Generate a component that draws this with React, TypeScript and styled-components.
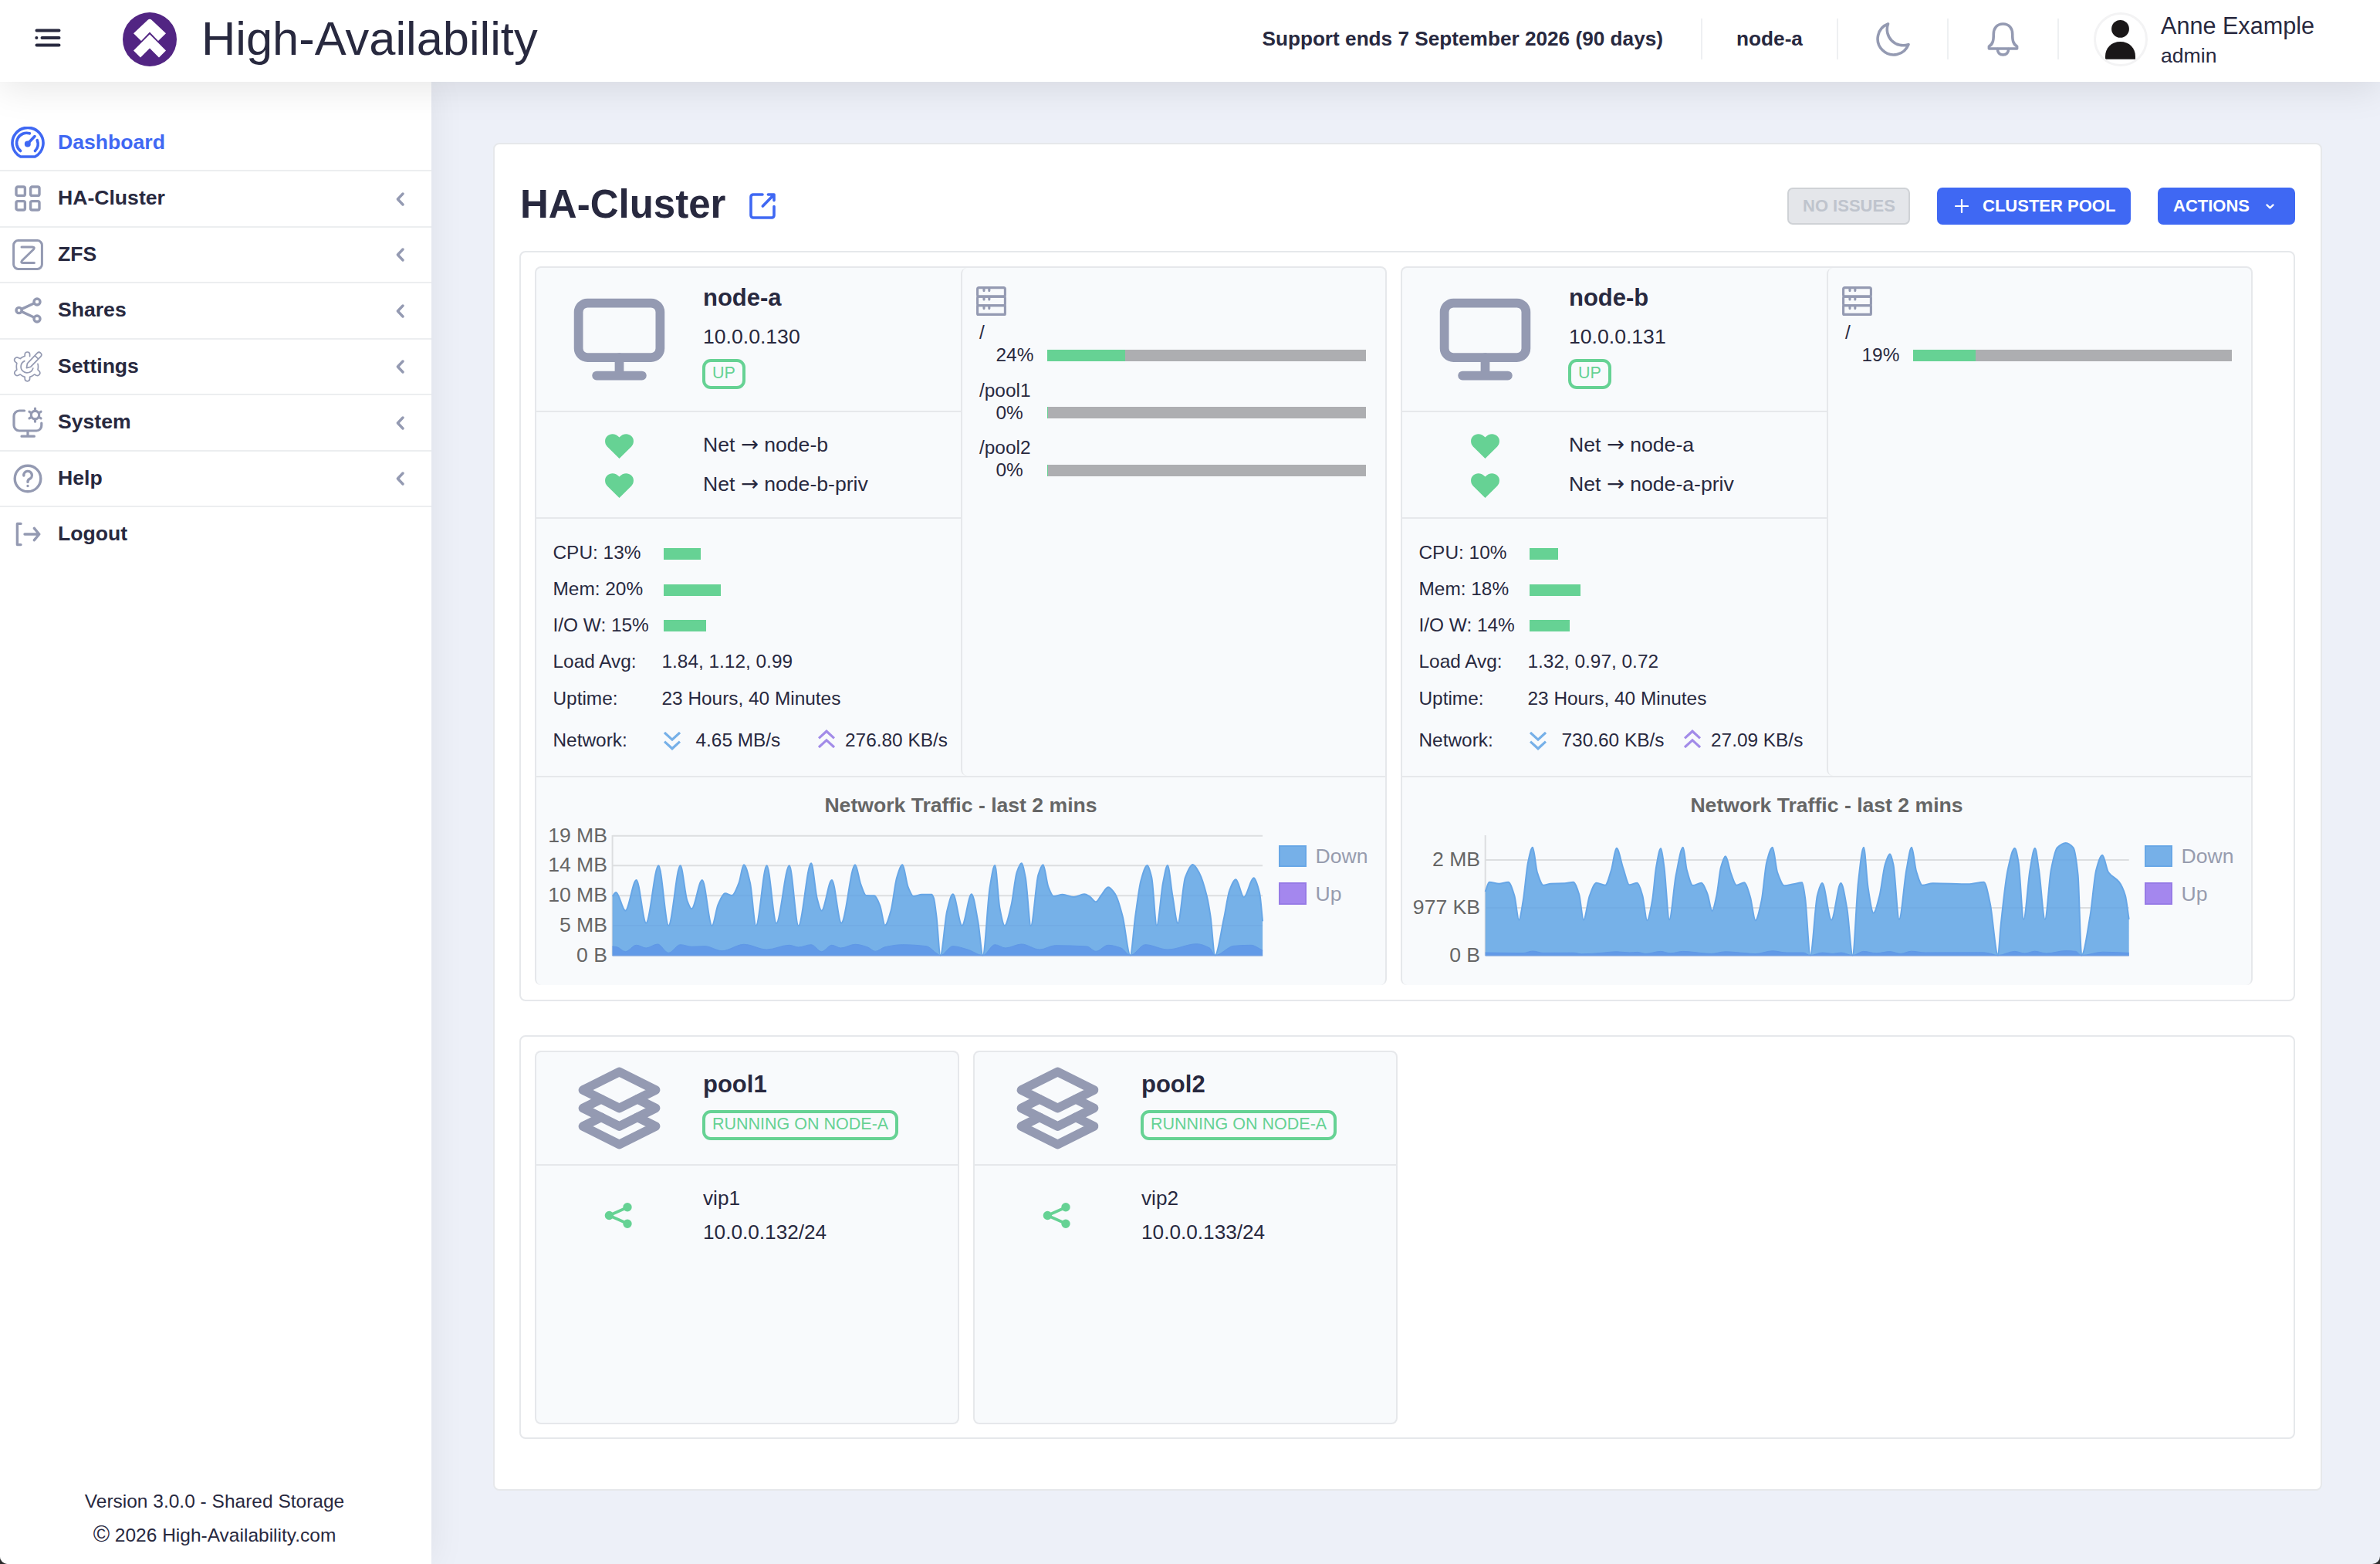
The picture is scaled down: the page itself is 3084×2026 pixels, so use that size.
import React from "react"
import styled, { createGlobalStyle } from "styled-components"

const ink = "#28293f"
const muted = "#949ab2"
const green = "#66d294"
const blue = "#3f68f3"
const line = "#e6e8eb"
const surface = "#f8fafc"

const GlobalStyle = createGlobalStyle`
  * {
    box-sizing: border-box;
  }
  body {
    margin: 0;
    background: #2b2b2b;
    color: ${ink};
    font-family: "Liberation Sans", Arial, Helvetica, sans-serif;
    font-size: 26.6px;
  }
  svg {
    display: block;
    flex: none;
  }
`

const Page = styled.div`
  display: flex;
  flex-direction: column;
  width: 3084px;
  height: 2026px;
  overflow: hidden;
  background: #edf0f8;
  border-radius: 0 0 10px 10px;
`

/* top bar */

const TopBar = styled.header`
  position: relative;
  z-index: 2;
  display: flex;
  align-items: center;
  flex: none;
  height: 106px;
  padding: 0 0 5px 45px;
  background: #fff;
  box-shadow: 0 8px 48px rgba(0, 0, 0, 0.1);
`

const Brand = styled.div`
  display: flex;
  align-items: center;
  gap: 32px;
  margin-left: 80px;
`

const BrandName = styled.div`
  font-size: 61.4px;
  line-height: 70px;
  padding-bottom: 1px;
`

const Support = styled.div`
  margin-left: auto;
  margin-right: 49px;
  font-size: 26.2px;
  font-weight: 700;
`

const BarCell = styled.div<{ $width: number }>`
  display: flex;
  align-items: center;
  justify-content: center;
  width: ${({ $width }) => $width}px;
  height: 53px;
  border-left: 2px solid #eef0f2;
  font-size: 26.2px;
  font-weight: 700;
`

const UserCell = styled(BarCell)`
  justify-content: flex-start;
  gap: 17px;
  padding-left: 45px;
  font-weight: 400;
`

const Avatar = styled.div`
  width: 70px;
  height: 70px;
  border: 3px solid #f3f3f4;
  border-radius: 50%;
  overflow: hidden;
  flex: none;
`

const UserText = styled.div`
  padding-top: 4px;
  font-size: 26.6px;
  line-height: 39px;
`

const UserName = styled.div`
  font-size: 30.6px;
`

/* sidebar */

const Body = styled.div`
  display: flex;
  flex: 1;
  min-height: 0;
`

const Sidebar = styled.nav`
  position: relative;
  z-index: 1;
  display: flex;
  flex-direction: column;
  flex: none;
  width: 559px;
  padding-top: 43.5px;
  background: #fff;
  box-shadow: 0 0 44px rgba(0, 0, 0, 0.07);
`

const NavRow = styled.a<{ $active?: boolean; $last?: boolean }>`
  display: flex;
  align-items: center;
  height: 72.5px;
  padding: 0 35px 0 14px;
  border-bottom: 2px solid ${({ $last }) => ($last ? "transparent" : "#eceef0")};
  color: ${({ $active }) => ($active ? blue : muted)};
`

const NavIcon = styled.span`
  display: flex;
  justify-content: center;
  width: 44px;
`

const NavLabel = styled.span<{ $active?: boolean }>`
  flex: 1;
  margin-left: 17px;
  padding-bottom: 1.5px;
  color: ${({ $active }) => ($active ? blue : ink)};
  font-weight: 700;
`

const Footer = styled.footer`
  margin-top: auto;
  padding: 0 3px 15px 0;
  font-size: 24.5px;
  line-height: 44px;
  text-align: center;
`

const Copyright = styled.span`
  font-size: 29px;
  line-height: 1;
`

/* main panel */

const Main = styled.main`
  flex: 1;
  padding: 79px 75px 0 80px;
`

const Panel = styled.section`
  height: 1746px;
  padding: 56px 33px 0 32px;
  background: #fff;
  border: 2px solid ${line};
  border-radius: 8px;
`

const PanelHead = styled.div`
  display: flex;
  align-items: center;
  height: 48px;
  margin-bottom: 34px;
`

const PanelTitle = styled.h1`
  margin: 0 31px 0 1px;
  padding-bottom: 4px;
  font-size: 51px;
  line-height: 48px;
`

const Buttons = styled.div`
  display: flex;
  gap: 35px;
  margin-left: auto;
`

const Button = styled.button<{ $width: number; $disabled?: boolean }>`
  display: flex;
  align-items: center;
  gap: 18px;
  width: ${({ $width }) => $width}px;
  height: 48px;
  padding: 0 18px;
  border: 2px solid ${({ $disabled }) => ($disabled ? "#cfd2d6" : blue)};
  border-radius: 7px;
  background: ${({ $disabled }) => ($disabled ? "#e4e6ea" : blue)};
  color: ${({ $disabled }) => ($disabled ? "#bfc4cd" : "#fff")};
  font-family: inherit;
  font-size: 22px;
  font-weight: 700;
  white-space: nowrap;
`

const Group = styled.div<{ $height: number }>`
  display: flex;
  align-items: flex-start;
  gap: 18px;
  height: ${({ $height }) => $height}px;
  margin-bottom: 44px;
  padding: 18px;
  border: 2px solid ${line};
  border-radius: 8px;
`

const Card = styled.article<{ $width: number; $height: number; $open?: boolean }>`
  flex: none;
  width: ${({ $width }) => $width}px;
  height: ${({ $height }) => $height}px;
  background: ${surface};
  border: 2px solid ${line};
  border-bottom-width: ${({ $open }) => ($open ? 0 : 2)}px;
  border-radius: 8px;
`

const CardTop = styled.div`
  display: flex;
  height: 660px;
  border-bottom: 2px solid ${line};
`

const NodeInfo = styled.div`
  width: 550px;
`

const IconRow = styled.div<{ $height: number; $top: number; $rule?: boolean }>`
  display: flex;
  height: ${({ $height }) => $height}px;
  padding-top: ${({ $top }) => $top}px;
  border-bottom: ${({ $rule }) => ($rule ? 2 : 0)}px solid ${line};
`

const IconCell = styled.div<{ $top: number }>`
  display: flex;
  flex-direction: column;
  align-items: center;
  width: 215px;
  padding-top: ${({ $top }) => $top}px;
  color: ${muted};
`

const Details = styled.div<{ $top?: number }>`
  padding: ${({ $top = 0 }) => $top}px 0 0 1px;
`

const Name = styled.div`
  font-size: 31px;
  font-weight: 700;
  line-height: 50px;
`

const Address = styled.div`
  line-height: 50px;
`

const Badge = styled.span<{ $top: number }>`
  display: block;
  width: fit-content;
  height: 39px;
  margin-top: ${({ $top }) => $top}px;
  margin-left: -1px;
  padding: 0 9px;
  border: 4px solid ${green};
  border-radius: 11px;
  color: ${green};
  font-size: 21.5px;
  line-height: 29px;
  text-transform: uppercase;
`

const Hearts = styled.div`
  display: flex;
  flex-direction: column;
  gap: 19px;
  color: ${green};
`

const NetLine = styled.div`
  line-height: 51px;
`

const Arrow = styled.span`
  font-family: "DejaVu Sans", sans-serif;
  font-size: 27.5px;
  line-height: 1;
`

const Stats = styled.div`
  padding: 21px 0 0 21.5px;
  font-size: 24.4px;
`

const StatRow = styled.div<{ $height?: number }>`
  display: grid;
  grid-template-columns: 141px 1fr;
  align-items: center;
  height: ${({ $height = 46.8 }) => $height}px;
  white-space: nowrap;
`

const StatBar = styled.div`
  height: 15px;
  margin: 2px 0 0 2px;
  background: ${green};
`

const Rates = styled.div`
  display: grid;
  grid-template-columns: 42px 158.5px 35px 1fr;
  align-items: center;
  padding-left: 2px;
`

const Disks = styled.div`
  width: 550px;
  padding: 24px 0 0 18px;
  border-left: 2px solid ${line};
  border-radius: 8px 0 0 8px;
  color: ${muted};
`

const Disk = styled.div`
  margin: 7px 0 16px 4px;
  color: ${ink};
  font-size: 24.4px;
  line-height: 30px;

  & + & {
    margin-top: 0;
  }
`

const DiskUsage = styled.div`
  display: grid;
  grid-template-columns: 66.5px 413px;
  align-items: center;
  padding-left: 21.5px;
  line-height: 28.5px;
`

const Track = styled.div`
  height: 15px;
  background: #adaeb1;
`

const TrackFill = styled.div`
  height: 100%;
  min-width: 1px;
  background: ${green};
`

const ChartTitle = styled.div`
  padding-top: 12px;
  color: #666;
  font-weight: 700;
  line-height: 49px;
  text-align: center;
`

const ChartRow = styled.div`
  display: flex;
`

const Legend = styled.div`
  display: flex;
  flex-direction: column;
  gap: 20px;
  padding: 26.5px 0 0 17px;
`

const LegendItem = styled.div`
  display: flex;
  align-items: center;
  gap: 11.5px;
  height: 28.7px;
  color: #979cae;
  line-height: 28px;
`

const Swatch = styled.span<{ $fill: string; $edge: string }>`
  width: 36px;
  height: 28.7px;
  background: ${({ $fill }) => $fill};
  border: 2px solid ${({ $edge }) => $edge};
`

const VipLine = styled.div`
  font-size: 26.2px;
  line-height: 44px;
`

/* icons */

const stroke = {
  fill: "none",
  stroke: "currentColor",
  strokeLinecap: "round",
  strokeLinejoin: "round",
} as const

const MenuIcon = () => (
  <svg width="34" height="24" viewBox="0 0 34 24" {...stroke} stroke={ink} strokeWidth="4" style={{ marginBottom: 3 }}>
    <path d="M2.5 2.5H31.5M9.5 12H31.5M2.3 12H2.4M2.5 21.5H31.5" />
  </svg>
)

const LogoIcon = () => (
  <svg width="70" height="70" viewBox="0 0 70 70">
    <circle cx="35" cy="35" r="35" fill="#522583" />
    <path
      d="M32.6 9.8Q35 7.6 37.4 9.8L56 27.2L46 37L35 25.4L24 37L14 27.2Z"
      fill="#fff"
    />
    <path d="M35 28.4L56 49.4L47 58.4L35 46.4L23 58.4L14 49.4Z" fill="#fff" />
  </svg>
)

const MoonIcon = () => (
  <svg width="44" height="44" viewBox="0 0 44 44" {...stroke} stroke={muted} strokeWidth="3.6">
    <path d="M15.5 2A20.6 20.6 0 1 0 42 28.6A20.8 20.8 0 0 1 15.5 2Z" />
  </svg>
)

const BellIcon = () => (
  <svg width="41" height="44" viewBox="0 0 41 44" {...stroke} stroke={muted} strokeWidth="3.6">
    <path d="M20.5 2C12.3 2 8.3 8 8.3 15C8.3 23 7.6 28 2.4 31V34H38.6V31C33.4 28 32.7 23 32.7 15C32.7 8 28.7 2 20.5 2Z" />
    <path d="M13.4 34.5C13.4 39 16 42 20.5 42C25 42 27.6 39 27.6 34.5" />
  </svg>
)

const PersonIcon = () => (
  <svg width="64" height="64" viewBox="3 3 64 64" fill="#1a1718">
    <circle cx="34.5" cy="21.4" r="11.4" />
    <path d="M15 60.7V57C15 46 23 38 34.5 38S54 46 54 57V60.7Z" />
  </svg>
)

const DashboardIcon = () => (
  <svg width="44" height="41" viewBox="0 0 44 41" {...stroke} strokeWidth="3.6">
    <path d="M12.6 39A20 20 0 1 1 31.4 39Z" />
    <path d="M12.6 31.5A13 13 0 0 1 24.4 8.8M34.2 17.6A13 13 0 0 1 31.4 31.5M22 22L31 12.6" />
    <circle cx="21.8" cy="22.4" r="2.2" fill="currentColor" />
  </svg>
)

const GridIcon = () => (
  <svg width="34" height="34" viewBox="0 0 34 34" {...stroke} strokeWidth="3.4">
    <rect x="2" y="2" width="11.4" height="11.4" rx="2" />
    <rect x="20.6" y="2" width="11.4" height="11.4" rx="2" />
    <rect x="2" y="20.6" width="11.4" height="11.4" rx="2" />
    <rect x="20.6" y="20.6" width="11.4" height="11.4" rx="2" />
  </svg>
)

const ZfsIcon = () => (
  <svg width="40" height="40" viewBox="0 0 40 40" {...stroke} strokeWidth="3">
    <rect x="1.6" y="1.6" width="36.8" height="36.8" rx="6" />
    <path d="M12 10H26Q29.6 10 27.5 13L12.6 27.5Q10.4 30.6 14 30.6H28.4" />
  </svg>
)

const ShareIcon = () => (
  <svg width="35" height="34" viewBox="0 0 35 34" {...stroke} strokeWidth="3.4">
    <circle cx="5.6" cy="17" r="3.6" />
    <circle cx="29" cy="6" r="4" />
    <circle cx="29" cy="28" r="4" />
    <path d="M9 15.4L25.4 7.8M9 18.6L25.4 26.2" />
  </svg>
)

const SettingsIcon = () => (
  <svg width="38" height="40" viewBox="0 0 38 40" {...stroke} strokeWidth="1.7">
    <path d="M21.6 6.6V4.2a3.2 3.2 0 0 0-6.4 0V6.2C12.8 7 10.8 8 9.2 9.6L6.8 8.4a3.4 3.4 0 0 0-4.4 5L4.8 15.4C4.2 18 4.2 21.4 4.8 24L2.4 26.2a3.4 3.4 0 0 0 4.2 5L9.2 30C10.8 31.6 12.8 32.6 15.2 33.4V35.6a3.2 3.2 0 0 0 6.4 0V33.4C24 32.6 26 31.6 27.6 30L30 31.2a3.4 3.4 0 0 0 4.2-5L32 24C32.6 21.6 32.6 18.6 32 16.4" />
    <path d="M14.8 12.6A8 8 0 1 0 25.8 22" />
    <path d="M17.4 21.6L18.4 15.8L31.2 2.4A3 3 0 0 1 35.8 6.8L22.8 20.2ZM28.2 5.6L32.6 10" />
  </svg>
)

const SystemIcon = () => (
  <svg width="40" height="40" viewBox="0 0 40 40" {...stroke} strokeWidth="3.2">
    <path d="M15.6 5H9A7 7 0 0 0 2 12V24A7 7 0 0 0 9 31H31A6.6 6.6 0 0 0 37.8 24V21M20 31V38M12 38.2H28.4" />
    <circle cx="29.5" cy="10.6" r="5.2" />
    <path d="M29.5 5V2M29.5 16.2V19.2M24.6 7.8L22 6.3M34.4 13.4L37 14.9M24.6 13.4L22 14.9M34.4 7.8L37 6.3" />
  </svg>
)

const HelpIcon = () => (
  <svg width="38" height="38" viewBox="0 0 38 38" {...stroke} strokeWidth="3.4">
    <circle cx="19" cy="19" r="16.8" />
    <path d="M13.8 15A5.3 5.3 0 1 1 21 19.6C19.6 20.4 19 21 19 23.4M19 28.4V28.5" />
  </svg>
)

const LogoutIcon = () => (
  <svg width="34" height="32" viewBox="0 0 34 32" {...stroke} strokeWidth="3.4">
    <path d="M8 2.4H3.4V29.6H8M13 16H31.4M25.4 8.4L31.8 16L25.4 23.6" />
  </svg>
)

const ChevronLeft = () => (
  <svg width="11" height="18" viewBox="0 0 11 18" {...stroke} strokeWidth="3.4" style={{ marginTop: 1 }}>
    <path d="M9 2L2.4 9L9 16" />
  </svg>
)

const ExternalIcon = () => (
  <svg width="34" height="34" viewBox="0 0 34 34" {...stroke} stroke={blue} strokeWidth="3.6">
    <path d="M17 2H5A3 3 0 0 0 2 5V29A3 3 0 0 0 5 32H29A3 3 0 0 0 32 29V17.5M24.4 2H32V9.6M31.4 2.6L17.4 17" />
  </svg>
)

const PlusIcon = () => (
  <svg width="18" height="18" viewBox="0 0 18 18" {...stroke} strokeWidth="2.2" style={{ marginLeft: 3 }}>
    <path d="M9 1V17M1 9H17" />
  </svg>
)

const ChevronDown = () => (
  <svg width="11" height="7" viewBox="0 0 11 7" {...stroke} strokeWidth="2.2" style={{ marginTop: 1, marginLeft: 3 }}>
    <path d="M1.4 1.4L5.5 5.4L9.6 1.4" />
  </svg>
)

const MonitorIcon = () => (
  <svg width="141" height="141" viewBox="0 0 24 24" {...stroke} strokeWidth="2">
    <rect x="3" y="4" width="18" height="12" rx="2" />
    <path d="M7 20H17M12 16V20" />
  </svg>
)

const LayersIcon = () => (
  <svg width="141" height="141" viewBox="0 0 24 24" {...stroke} strokeWidth="2">
    <path d="M12 4L4 8L12 12L20 8Z" />
    <path d="M8 10L4 12L12 16L20 12L16 10" />
    <path d="M8 14L4 16L12 20L20 16L16 14" />
  </svg>
)

const HeartIcon = () => (
  <svg width="37" height="32" viewBox="0 0 37 32" fill="currentColor">
    <path d="M18.5 32L2.8 16.4C-1 12.3-.8 6 3 2.7C7.4-1.2 14-.6 18.5 4.6C23-.6 29.6-1.2 34 2.7C37.8 6 38 12.3 34.2 16.4Z" />
  </svg>
)

const DiskIcon = () => (
  <svg width="39" height="38" viewBox="0 0 39 38" {...stroke} strokeWidth="3.1">
    <rect x="1.6" y="1.6" width="35.8" height="11.5" rx="2" />
    <rect x="1.6" y="13.1" width="35.8" height="11.6" rx="2" />
    <rect x="1.6" y="24.7" width="35.8" height="11.7" rx="1" />
    <path d="M10 2V5.6M16.8 2V5.6M10 13.6V17M16.8 13.6V17M10 25V28.6M16.8 25V28.6" />
  </svg>
)

const VipIcon = () => (
  <svg width="37" height="33" viewBox="0 0 37 33" {...stroke} stroke={green} strokeWidth="3.6" style={{ marginRight: 2 }}>
    <path d="M30 6L6.4 16.5L30 27" />
    <circle cx="6.4" cy="16.5" r="3.9" fill={green} />
    <circle cx="30" cy="5.8" r="3.9" fill={green} />
    <circle cx="30" cy="27.2" r="3.9" fill={green} />
  </svg>
)

const RateIcon: React.FC<{ up?: boolean }> = ({ up }) => (
  <svg
    width="22"
    height="24"
    viewBox="0 0 22 24"
    {...stroke}
    strokeLinecap="butt"
    strokeLinejoin="miter"
    stroke={up ? "#a28be8" : "#76b0e8"}
    strokeWidth="3.2"
    style={{ marginTop: up ? -3 : 3 }}
  >
    <path d={up ? "M1 11.4L11 2.2L21 11.4M1 23L11 13.8L21 23" : "M1 1L11 10.2L21 1M1 12.6L11 21.8L21 12.6"} />
  </svg>
)

/* traffic chart */

type Point = [number, number]

// monotone cubic through the samples, so peaks never overshoot
const curve = (pts: Point[]) => {
  const n = pts.length
  const slope = pts.slice(1).map((p, i) => (p[1] - pts[i][1]) / (p[0] - pts[i][0]))
  const tan = pts.map((_, i) => {
    if (i === 0) return slope[0]
    if (i === n - 1) return slope[n - 2]
    const a = slope[i - 1]
    const b = slope[i]
    return a * b <= 0 ? 0 : (2 * a * b) / (a + b)
  })
  let d = `M${pts[0][0]} ${pts[0][1]}`
  for (let i = 0; i < n - 1; i++) {
    const [x0, y0] = pts[i]
    const [x1, y1] = pts[i + 1]
    const h = (x1 - x0) / 3
    d += `C${x0 + h} ${y0 + tan[i] * h} ${x1 - h} ${y1 - tan[i + 1] * h} ${x1} ${y1}`
  }
  return d
}

const FLOOR = 155.7

interface Traffic {
  left: number
  width: number
  ticks: { label: string; y: number }[]
  down: Point[]
  up: Point[]
}

const trafficA: Traffic = {
  left: 98.6,
  width: 842.5,
  ticks: [
    { label: "19 MB", y: 0.7 },
    { label: "14 MB", y: 39.2 },
    { label: "10 MB", y: 78.2 },
    { label: "5 MB", y: 117 },
    { label: "0 B", y: FLOOR },
  ],
  down: [
    [0, 79], [4.6, 74], [16.8, 97.7], [31, 58], [43.6, 113.7], [59.7, 39.3], [72.7, 117], [88, 39.3],
    [96.8, 84.7], [102.6, 95.3], [116.3, 58], [129, 117.3], [137, 89.7], [145.8, 75.3], [155, 78],
    [163.8, 62], [170.3, 38.3], [178.3, 61.3], [186, 117.3], [200, 39.3], [212.4, 114], [229.2, 39.3],
    [241, 117.3], [257.5, 36.3], [265.2, 82], [271, 97.7], [284.3, 58], [296.6, 113.7], [314.5, 38.3],
    [321.8, 63.7], [328.7, 78], [339.4, 78.3], [346.7, 91.3], [353.2, 116.7], [360.8, 98],
    [368.5, 54.7], [375.8, 38.3], [383, 67], [390, 79], [401, 76.7], [413.6, 76.7], [416.3, 81.3],
    [419.8, 104.7], [425, 155.5], [433.6, 98], [441.2, 76.3], [453, 117], [465.3, 76.3], [473.7, 112],
    [480, 155.5], [489, 68], [495.6, 39], [501.9, 94.7], [508.2, 117], [516.7, 91.3], [524, 48],
    [530, 36.3], [535.2, 54.7], [542.2, 117.3], [551.8, 51.3], [558, 38.3], [564.8, 67], [571.8, 79],
    [583.3, 76.7], [598, 80], [611.4, 76.3], [618.4, 79.3], [626.5, 86.3], [633.2, 78], [642.4, 67.3],
    [651.7, 76.7], [661, 104.7], [671, 155.5], [677.6, 104.7], [685, 58], [693, 39], [698.7, 54.7],
    [705.3, 117], [713.5, 61.3], [719.4, 39], [725.7, 78], [732.7, 114], [742.3, 54.7], [752, 38],
    [760.8, 49.7], [770, 78], [774.9, 104.7], [780.8, 155.5], [792.3, 108], [799.7, 71.3],
    [807.8, 57.3], [818.2, 80.3], [831, 55.3], [838.5, 74.7], [842.5, 111.3],
  ],
  up: [
    [0, 144], [5.7, 144.7], [16.8, 150.7], [31, 142.3], [43.6, 146], [58.5, 141], [72.7, 152.3],
    [88, 141.7], [102.6, 144.3], [119.8, 143.7], [142, 149.7], [170.3, 141.3], [200, 148],
    [229.2, 142.3], [241, 145], [257.5, 141.7], [271, 150.7], [284.3, 142.3], [295.8, 146],
    [314.5, 141.3], [330.2, 144.7], [340.6, 150.3], [353.2, 144.7], [375.8, 141.7], [406.8, 143.7],
    [420.2, 153], [425, 155.7], [441, 143.7], [460.3, 148], [480, 155.5], [495.6, 141.7],
    [509.3, 146], [530, 141], [553.7, 148], [574, 142.7], [614.7, 144], [626.5, 150.3],
    [642.4, 142.3], [659, 146], [671, 155.5], [690.5, 141.7], [719.4, 148], [757, 140.7],
    [773.8, 146], [780.8, 155.5], [805.2, 143.3], [827.4, 142.3], [842.5, 149],
  ],
}

const trafficB: Traffic = {
  left: 107.7,
  width: 834,
  ticks: [
    { label: "2 MB", y: 32 },
    { label: "977 KB", y: 94 },
    { label: "0 B", y: FLOOR },
  ],
  down: [
    [0, 73], [5.1, 60.7], [17.8, 62.7], [29.7, 60.7], [37.6, 78], [43.5, 109.7], [49, 84.7],
    [55.4, 34.7], [61.3, 15.7], [67.2, 48], [75.1, 64.7], [85, 62.7], [102.8, 62.3], [113.9, 60.7],
    [121.4, 76.3], [127.3, 109.7], [135.2, 78], [143.9, 61.7], [155.4, 64.7], [163.3, 44.7],
    [170, 16.7], [178.7, 43], [186.6, 64.3], [196.9, 61.7], [203.6, 78], [209.6, 110.3],
    [216.3, 84.7], [221.4, 41.3], [227.4, 17], [231.7, 41.3], [238.4, 109.3], [247.1, 51.3],
    [256.2, 15.7], [261, 44.7], [268.9, 65], [280, 61.7], [287.9, 76.3], [293.8, 98], [299.7, 78],
    [305.3, 41.3], [311.2, 27.3], [318.3, 49.7], [325.4, 64.7], [335.7, 61.3], [343.2, 79.7],
    [350, 110.3], [357.9, 84.7], [364.6, 34.7], [372.1, 15.7], [378.4, 48], [387.5, 65.3],
    [399.4, 63.3], [410.4, 61.3], [414.4, 81.3], [421.1, 155.5], [430.2, 78], [436.5, 62],
    [448.4, 109.7], [460.7, 62], [468.6, 94.7], [475.9, 155.5], [483.2, 61.3], [490.3, 15.7],
    [495.9, 68], [503, 100.7], [510.9, 78], [518, 38], [524.3, 24.3], [528.7, 38], [536.2, 109],
    [545.7, 44.7], [552.4, 15.7], [558.3, 46.3], [566.2, 64.7], [580, 62.3], [625.6, 63.3],
    [646, 60.7], [654, 88], [664.3, 155.5], [667.8, 118], [677, 44.7], [686, 16.7], [690.8, 34.7],
    [697.5, 109], [705.8, 44.7], [712.2, 16.7], [717.3, 44.7], [725.2, 109], [733.1, 44.7],
    [741, 16.3], [752.1, 10], [762, 16.3], [767.9, 51.3], [772.6, 155.5], [783.7, 104.7],
    [791.6, 44.7], [799.5, 25.7], [807.4, 48], [821.3, 60.7], [829.2, 78], [834, 109],
  ],
  up: [
    [0, 152], [49, 152.6], [61.3, 150], [75, 152.4], [114, 152.2], [125, 153.8], [150, 152.4],
    [170, 150.8], [187, 152], [197, 151.4], [208, 153.4], [227, 150.4], [240, 152.8], [256, 150.4],
    [285, 153], [293, 153.4], [311, 150.8], [336, 152.6], [350, 153.6], [372, 149.8], [390, 152],
    [412, 152], [421, 155.6], [437, 152], [450, 153.4], [461, 152], [476, 155.6], [490, 150.4],
    [507, 152.8], [524, 150.6], [538, 153.4], [552, 150.2], [570, 152], [645, 151.8], [655, 153.4],
    [664, 155.6], [686, 150.4], [699, 153], [712, 150.2], [727, 153], [752, 149.6], [765, 150.4],
    [772.6, 155.6], [800, 151.2], [834, 152.4],
  ],
}

const TrafficChart: React.FC<{ data: Traffic }> = ({ data }) => {
  const close = `L${data.width} ${FLOOR}L0 ${FLOOR}Z`
  const down = curve(data.down)
  const up = curve(data.up)
  return (
    <>
      <ChartTitle>Network Traffic - last 2 mins</ChartTitle>
      <ChartRow>
        <svg width="945" height="200" viewBox="0 0 945 200">
          <g transform={`translate(${data.left} 14)`} fill="none" strokeWidth="2">
            <path d={`M0 0V${FLOOR}`} stroke="#dcdee0" />
            {data.ticks.map(({ label, y }) => (
              <React.Fragment key={label}>
                <path d={`M0 ${y}H${data.width}`} stroke="#dcdee0" />
                <text x="-6.6" y={y + 8} textAnchor="end" fontSize="26.6" fill="#666">
                  {label}
                </text>
              </React.Fragment>
            ))}
            <path d={down + close} fill="#5fa3e4" fillOpacity="0.85" />
            <path d={down} stroke="#67a6e6" />
            <path d={up + close} fill="#629ae7" />
            <path d={up} stroke="#5f98e6" strokeWidth="1" />
            <path d={`M0 ${FLOOR}H${data.width}`} stroke="#6f9fe4" strokeWidth="1.5" />
          </g>
        </svg>
        <Legend>
          <LegendItem>
            <Swatch $fill="#76b0e8" $edge="#68a7e6" />
            Down
          </LegendItem>
          <LegendItem>
            <Swatch $fill="#a487ee" $edge="#977be6" />
            Up
          </LegendItem>
        </Legend>
      </ChartRow>
    </>
  )
}

/* cards */

interface NodeData {
  name: string
  ip: string
  nets: string[]
  usage: { label: string; value: number; width: number }[]
  load: string
  down: string
  up: string
  disks: { path: string; used: number }[]
  traffic: Traffic
}

const nodes: NodeData[] = [
  {
    name: "node-a",
    ip: "10.0.0.130",
    nets: ["node-b", "node-b-priv"],
    usage: [
      { label: "CPU", value: 13, width: 48.4 },
      { label: "Mem", value: 20, width: 74 },
      { label: "I/O W", value: 15, width: 55.2 },
    ],
    load: "1.84, 1.12, 0.99",
    down: "4.65 MB/s",
    up: "276.80 KB/s",
    disks: [
      { path: "/", used: 24 },
      { path: "/pool1", used: 0 },
      { path: "/pool2", used: 0 },
    ],
    traffic: trafficA,
  },
  {
    name: "node-b",
    ip: "10.0.0.131",
    nets: ["node-a", "node-a-priv"],
    usage: [
      { label: "CPU", value: 10, width: 37.4 },
      { label: "Mem", value: 18, width: 66.4 },
      { label: "I/O W", value: 14, width: 52 },
    ],
    load: "1.32, 0.97, 0.72",
    down: "730.60 KB/s",
    up: "27.09 KB/s",
    disks: [{ path: "/", used: 19 }],
    traffic: trafficB,
  },
]

const NodeCard: React.FC<{ node: NodeData }> = ({ node }) => (
  <Card $width={1104} $height={931} $open>
    <CardTop>
      <NodeInfo>
        <IconRow $height={187} $top={0} $rule>
          <IconCell $top={22}>
            <MonitorIcon />
          </IconCell>
          <Details $top={14}>
            <Name>{node.name}</Name>
            <Address>{node.ip}</Address>
            <Badge $top={4}>Up</Badge>
          </Details>
        </IconRow>
        <IconRow $height={138} $top={16} $rule>
          <IconCell $top={12}>
            <Hearts>
              {node.nets.map(net => (
                <HeartIcon key={net} />
              ))}
            </Hearts>
          </IconCell>
          <Details $top={1}>
            {node.nets.map(net => (
              <NetLine key={net}>
                Net <Arrow>→</Arrow> {net}
              </NetLine>
            ))}
          </Details>
        </IconRow>
        <Stats>
          {node.usage.map(({ label, value, width }) => (
            <StatRow key={label}>
              <span>{label}: {value}%</span>
              <StatBar style={{ width }} />
            </StatRow>
          ))}
          <StatRow>
            <span>Load Avg:</span>
            <span>{node.load}</span>
          </StatRow>
          <StatRow $height={48.8}>
            <span>Uptime:</span>
            <span>23 Hours, 40 Minutes</span>
          </StatRow>
          <StatRow $height={59.2}>
            <span>Network:</span>
            <Rates>
              <RateIcon />
              <span>{node.down}</span>
              <RateIcon up />
              <span>{node.up}</span>
            </Rates>
          </StatRow>
        </Stats>
      </NodeInfo>
      <Disks>
        <DiskIcon />
        {node.disks.map(({ path, used }) => (
          <Disk key={path}>
            {path}
            <DiskUsage>
              <span>{used}%</span>
              <Track>
                <TrackFill style={{ width: `${used ? used + 0.5 : 0}%` }} />
              </Track>
            </DiskUsage>
          </Disk>
        ))}
      </Disks>
    </CardTop>
    <TrafficChart data={node.traffic} />
  </Card>
)

const pools = [
  { name: "pool1", status: "Running on node-a", vip: "vip1", address: "10.0.0.132/24" },
  { name: "pool2", status: "Running on node-a", vip: "vip2", address: "10.0.0.133/24" },
]

const PoolCard: React.FC<{ pool: (typeof pools)[number] }> = ({ pool }) => (
  <Card $width={550} $height={484}>
    <IconRow $height={147} $top={0} $rule>
      <IconCell $top={2}>
        <LayersIcon />
      </IconCell>
      <Details $top={17}>
        <Name>{pool.name}</Name>
        <Badge $top={8}>{pool.status}</Badge>
      </Details>
    </IconRow>
    <IconRow $height={120} $top={20}>
      <IconCell $top={28}>
        <VipIcon />
      </IconCell>
      <Details>
        <VipLine>{pool.vip}</VipLine>
        <VipLine>{pool.address}</VipLine>
      </Details>
    </IconRow>
  </Card>
)

const menu = [
  { label: "HA-Cluster", icon: <GridIcon /> },
  { label: "ZFS", icon: <ZfsIcon /> },
  { label: "Shares", icon: <ShareIcon /> },
  { label: "Settings", icon: <SettingsIcon /> },
  { label: "System", icon: <SystemIcon /> },
  { label: "Help", icon: <HelpIcon /> },
]

const App: React.FC = () => (
  <Page>
    <GlobalStyle />
    <TopBar>
      <MenuIcon />
      <Brand>
        <LogoIcon />
        <BrandName>High-Availability</BrandName>
      </Brand>
      <Support>Support ends 7 September 2026 (90 days)</Support>
      <BarCell $width={176}>node-a</BarCell>
      <BarCell $width={143}>
        <MoonIcon />
      </BarCell>
      <BarCell $width={143}>
        <BellIcon />
      </BarCell>
      <UserCell $width={418}>
        <Avatar>
          <PersonIcon />
        </Avatar>
        <UserText>
          <UserName>Anne Example</UserName>
          admin
        </UserText>
      </UserCell>
    </TopBar>
    <Body>
      <Sidebar>
        <NavRow $active>
          <NavIcon>
            <DashboardIcon />
          </NavIcon>
          <NavLabel $active>Dashboard</NavLabel>
        </NavRow>
        {menu.map(({ label, icon }) => (
          <NavRow key={label}>
            <NavIcon>{icon}</NavIcon>
            <NavLabel>{label}</NavLabel>
            <ChevronLeft />
          </NavRow>
        ))}
        <NavRow $last>
          <NavIcon>
            <LogoutIcon />
          </NavIcon>
          <NavLabel>Logout</NavLabel>
        </NavRow>
        <Footer>
          <div>Version 3.0.0 - Shared Storage</div>
          <div>
            <Copyright>©</Copyright> 2026 High-Availability.com
          </div>
        </Footer>
      </Sidebar>
      <Main>
        <Panel>
          <PanelHead>
            <PanelTitle>HA-Cluster</PanelTitle>
            <ExternalIcon />
            <Buttons>
              <Button $width={159} $disabled>NO ISSUES</Button>
              <Button $width={251}>
                <PlusIcon />
                CLUSTER POOL
              </Button>
              <Button $width={178}>
                ACTIONS
                <ChevronDown />
              </Button>
            </Buttons>
          </PanelHead>
          <Group $height={972}>
            {nodes.map(node => (
              <NodeCard key={node.name} node={node} />
            ))}
          </Group>
          <Group $height={523}>
            {pools.map(pool => (
              <PoolCard key={pool.name} pool={pool} />
            ))}
          </Group>
        </Panel>
      </Main>
    </Body>
  </Page>
)

export default App
